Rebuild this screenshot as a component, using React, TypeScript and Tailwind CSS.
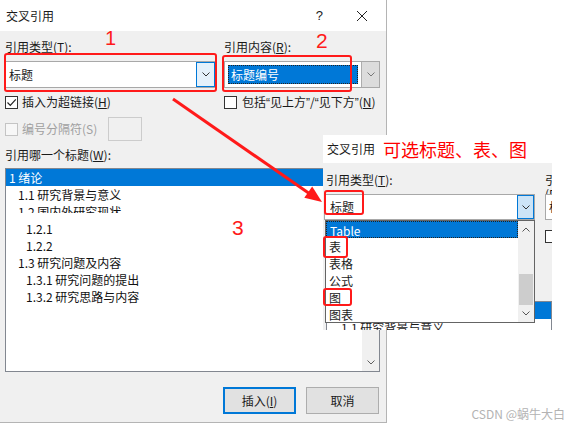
import React from 'react';

// 交叉引用对话框截图 + 标注
function Chevron({ up = false, color = '#333' }: { up?: boolean; color?: string }) {
  return (
    <svg width="8" height="5" viewBox="0 0 8 5" className={up ? 'rotate-180' : ''}>
      <path d="M0.5 0.5 L4 4 L7.5 0.5" fill="none" stroke={color} strokeWidth="1" />
    </svg>
  );
}

function Check({ checked = false, disabled = false }: { checked?: boolean; disabled?: boolean }) {
  return (
    <span
      className={`flex h-[13px] w-[13px] shrink-0 items-center justify-center border ${
        disabled ? 'border-[#c4c4c4] bg-[#f7f7f7]' : 'border-[#333] bg-white'
      }`}
    >
      {checked && (
        <svg width="11" height="11" viewBox="0 0 11 11">
          <path d="M1.5 5.5 L4.3 8.3 L9.8 2.3" fill="none" stroke="#222" strokeWidth="1.2" />
        </svg>
      )}
    </span>
  );
}

const Q = ({ c }: { c: string }) => <span className="font-['Liberation_Sans',sans-serif]">{c}</span>;

const headings = [
  { t: '1 绪论', pad: 'pl-[3px]', sel: true },
  { t: '1.1 研究背景与意义', pad: 'pl-[12px]' },
  { t: '1.2 国内外研究现状', pad: 'pl-[12px]', cut: true },
  { t: '1.2.1', pad: 'pl-[20px]' },
  { t: '1.2.2', pad: 'pl-[20px]' },
  { t: '1.3 研究问题及内容', pad: 'pl-[12px]' },
  { t: '1.3.1 研究问题的提出', pad: 'pl-[20px]' },
  { t: '1.3.2 研究思路与内容', pad: 'pl-[20px]' },
];

const types = ['Table', '表', '表格', '公式', '图', '图表'];

function MainDialog() {
  return (
    <div className="flex h-[423px] w-[387px] flex-col border-r border-b border-[#b4b4b4]">
      <div className="flex h-[31px] shrink-0 items-center bg-white pl-[6px] leading-[14px]">
        <span>交叉引用</span>
        <span className="ml-auto font-['Liberation_Sans',sans-serif] text-[13px]">?</span>
        <svg className="mr-[18px] ml-[33px]" width="12" height="12" viewBox="0 0 12 12">
          <path d="M1 1 L11 11 M11 1 L1 11" stroke="#222" strokeWidth="1" />
        </svg>
      </div>

      <div className="flex flex-1 flex-col bg-[#f0f0f0] pt-[9px] pr-[6px] pl-[5px]">
        <div className="grid grid-cols-[211px_156px] gap-x-[8px]">
          <div className="h-[14px] leading-[14px]">
            引用类型(<span className="underline">T</span>):
          </div>
          <div className="h-[14px] leading-[14px]">
            引用内容(<span className="underline">R</span>):
          </div>

          <div className="mt-[7px] flex h-[27px] border border-[#a8a8a8] bg-white">
            <div className="flex flex-1 items-center pl-[3px]">标题</div>
            <div className="flex w-[19px] items-center justify-center border border-[#0078d7] bg-[#e5f1fb]">
              <Chevron />
            </div>
          </div>
          <div className="mt-[7px] flex h-[27px] border border-[#a8a8a8] bg-white">
            <div className="flex flex-1 p-[3px]">
              <div className="flex flex-1 items-center border border-dotted border-[#222] bg-[#0078d7] pl-[2px] text-white">
                标题编号
              </div>
            </div>
            <div className="flex w-[18px] items-center justify-center border-l border-[#adadad] bg-[#dcdcdc]">
              <Chevron color="#777" />
            </div>
          </div>

          <div className="mt-[7px] flex h-[14px] items-center gap-[4px] leading-[14px]">
            <Check checked />
            <span>
              插入为超链接(<span className="underline">H</span>)
            </span>
          </div>
          <div className="mt-[7px] flex h-[14px] items-center gap-[5px] leading-[14px]">
            <Check />
            <span>
              包括<Q c="“" />见上方<Q c="”" />/<Q c="“" />见下方<Q c="”" />(<span className="underline">N</span>)
            </span>
          </div>
        </div>

        <div className="mt-[8px] flex h-[24px] items-center">
          <Check disabled />
          <span className="ml-[4px] w-[86px] text-[#a0a0a0]">编号分隔符(S)</span>
          <div className="h-[24px] w-[34px] border border-[#cccccc] bg-[#f0f0f0]" />
        </div>

        <div className="mt-[7px] h-[14px] leading-[14px]">
          引用哪一个标题(<span className="underline">W</span>):
        </div>

        <div className="mt-[6px] flex h-[204px] border border-[#828790] bg-white">
          <div className="flex flex-1 flex-col">
            {headings.map((h) => (
              <div
                key={h.t}
                className={`h-[17px] shrink-0 leading-[17px] ${h.pad} ${h.sel ? 'bg-[#0078d7] text-white' : 'text-[#111]'}`}
              >
                {h.cut ? <div className="h-[10px] overflow-hidden">{h.t}</div> : h.t}
              </div>
            ))}
          </div>
          <div className="flex w-[17px] flex-col justify-between bg-[#f0f0f0]">
            <div className="flex h-[17px] items-center justify-center">
              <Chevron up color="#606060" />
            </div>
            <div className="flex h-[17px] items-center justify-center">
              <Chevron color="#606060" />
            </div>
          </div>
        </div>

        <div className="mt-[15px] flex justify-end gap-[10px] pr-[1px]">
          <div className="flex h-[27px] w-[73px] items-center justify-center border-2 border-[#0078d7] bg-[#e1e1e1]">
            插入(<span className="underline">I</span>)
          </div>
          <div className="flex h-[27px] w-[73px] items-center justify-center border border-[#adadad] bg-[#e1e1e1]">
            取消
          </div>
        </div>
      </div>
    </div>
  );
}

function Inset() {
  return (
    <div className="absolute top-[135px] left-[323px] h-[195px] w-[229px] overflow-hidden">
      <div className="flex h-[28px] items-center bg-white pl-[4px] leading-[14px]">
        <span>交叉引用</span>
        <span className="ml-[8px] text-[18px] leading-[20px] text-[#ff0000]">可选标题、表、图</span>
      </div>
      <div className="h-[167px] bg-[#f0f0f0] pt-[10px] pl-[1px]">
        <div className="grid grid-cols-[211px_60px] gap-x-[10px]">
          <div className="h-[14px] pl-[2px] leading-[14px]">
            引用类型(<span className="underline">T</span>):
          </div>
          <div className="h-[14px] leading-[14px]">引用内容(R):</div>
          <div className="mt-[7px] flex h-[26px] border border-[#a8a8a8] bg-white">
            <div className="flex flex-1 items-center pl-[5px]">标题</div>
            <div className="flex w-[17px] items-center justify-center border border-[#0078d7] bg-[#cce4f7]">
              <Chevron />
            </div>
          </div>
          <div className="mt-[7px] flex h-[26px] items-center border border-[#a8a8a8] bg-white pl-[3px]">
            标题编号
          </div>
          <div />
          <div className="mt-[10px] flex h-[13px] items-center gap-[5px]">
            <Check />
            <span>包括</span>
          </div>
        </div>
        <div className="mt-[36px] h-[14px] pl-[2px] leading-[14px]">引用哪一个标题(W):</div>
        <div className="mt-[8px] ml-[2px] h-[60px] border border-[#828790] bg-white">
          <div className="h-[17px] bg-[#0078d7] pl-[3px] leading-[17px] text-white">1 绪论</div>
          <div className="h-[17px] pl-[14px] leading-[17px]">1.1 研究背景与意义</div>
        </div>
      </div>

      <div className="absolute top-[85px] left-[2px] flex h-[103px] w-[210px] border border-[#646464] bg-white">
        <div className="flex flex-1 flex-col">
          {types.map((t, i) => (
            <div
              key={t}
              className={`h-[17px] shrink-0 pl-[3px] leading-[17px] ${
                i === 0 ? 'border border-dotted border-[#222] bg-[#0078d7] pl-[2px] text-white' : ''
              }`}
            >
              {t}
            </div>
          ))}
        </div>
        <div className="flex w-[16px] flex-col bg-[#f0f0f0]">
          <div className="flex h-[17px] items-center justify-center">
            <Chevron up color="#555" />
          </div>
          <div className="flex-1" />
          <div className="mx-[1px] h-[31px] bg-[#cdcdcd]" />
          <div className="flex h-[17px] items-center justify-center">
            <Chevron color="#555" />
          </div>
        </div>
      </div>
    </div>
  );
}

function Annotations() {
  return (
    <>
      <div className="pointer-events-none absolute top-[53px] left-[4px] h-[39px] w-[213px] rounded-[3px] border-2 border-[#ff1a1a]" />
      <div className="pointer-events-none absolute top-[55px] left-[222px] h-[37px] w-[130px] rounded-[3px] border-2 border-[#ff1a1a]" />
      <div className="pointer-events-none absolute top-[190px] left-[324px] h-[25px] w-[40px] rounded-[3px] border-2 border-[#ff1a1a]" />
      <div className="pointer-events-none absolute top-[236px] left-[323px] h-[22px] w-[25px] rounded-[3px] border-2 border-[#ff1a1a]" />
      <div className="pointer-events-none absolute top-[288px] left-[323px] h-[18px] w-[29px] rounded-[3px] border-2 border-[#ff1a1a]" />

      <span className="absolute top-[27px] left-[105px] font-['Liberation_Sans',sans-serif] text-[20px] leading-[22px] text-[#ff1a1a]">
        1
      </span>
      <span className="absolute top-[30px] left-[316px] font-['Liberation_Sans',sans-serif] text-[21px] leading-[22px] text-[#ff1a1a]">
        2
      </span>
      <span className="absolute top-[217px] left-[232px] font-['Liberation_Sans',sans-serif] text-[21px] leading-[22px] text-[#ff1a1a]">
        3
      </span>

      <svg className="pointer-events-none absolute inset-0" width="568" height="426">
        <line x1="173" y1="99" x2="310" y2="194" stroke="#ff1a1a" strokeWidth="3" />
        <polygon points="322,202 304.3,197.8 312.2,186.5" fill="#ff1a1a" />
      </svg>

      <span className="absolute right-[3px] bottom-[5px] text-[12px] leading-[14px] text-[#b3b3b3]">
        CSDN @蜗牛大白
      </span>
    </>
  );
}

export default function App() {
  return (
    <div className="relative h-[426px] w-[568px] overflow-hidden bg-white font-['Noto_Sans_CJK_SC',sans-serif] text-[12px] text-[#1a1a1a]">
      <MainDialog />
      <Inset />
      <Annotations />
    </div>
  );
}
